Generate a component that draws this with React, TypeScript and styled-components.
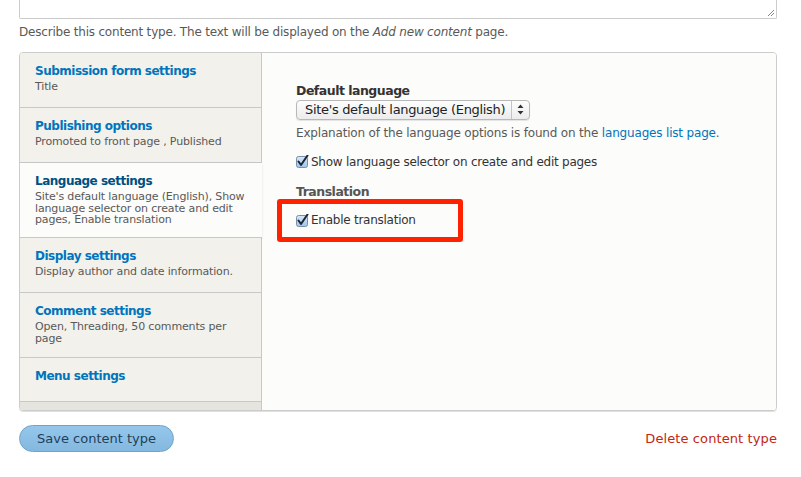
import React, {FC} from 'react';
import styled, {createGlobalStyle} from 'styled-components';

const GlobalStyle = createGlobalStyle`
  body {
    margin: 0;
    background: #fff;
    font-family: "DejaVu Sans", "Open Sans", sans-serif;
    color: #555;
  }
`;

const Page = styled.div`
  padding: 0 24px 0 19px;
`;

const TextArea = styled.div`
  position: relative;
  height: 20px;
  margin-top: -2px;
  border: 1px solid #ccc;
  border-top: none;
  border-radius: 0 0 2px 2px;
  background: #fff;
`;

const Grip = styled.svg`
  position: absolute;
  right: 1px;
  bottom: 1px;
`;

const Description = styled.div`
  margin-top: 5px;
  font-size: 12px;
  letter-spacing: -0.2px;
  line-height: 16px;
  color: #595959;
  em { font-style: italic; }
`;

const VerticalTabs = styled.div`
  display: flex;
  margin-top: 12px;
  height: 357px;
  border: 1px solid #ccc;
  border-radius: 4px;
  overflow: hidden;
  box-shadow: 0 1px 0 #e0e0e0;
`;

const Menu = styled.ul`
  width: 241px;
  margin: 0;
  padding: 0;
  list-style: none;
  display: flex;
  flex-direction: column;
  background: #e5e4df;
  border-right: 1px solid #c8c8c8;
`;

const MenuItem = styled.li<{ $selected?: boolean; $height: number }>`
  height: ${p => p.$height}px;
  box-sizing: border-box;
  padding: 10px 12px 0 15px;
  background: ${p => (p.$selected ? '#fcfcfa' : '#f2f1eb')};
  border-bottom: 1px solid #c8c8c8;
  margin-right: ${p => (p.$selected ? '-1px' : '0')};
  box-shadow: ${p => (p.$selected ? '0 1px 2px rgba(0,0,0,0.12)' : 'none')};
  position: relative;
`;

const TabTitle = styled.div<{ $selected?: boolean }>`
  font-size: 12px;
  font-weight: bold;
  letter-spacing: -0.5px;
  line-height: 16px;
  color: ${p => (p.$selected ? '#004f80' : '#0074bd')};
`;

const TabSummary = styled.div`
  font-size: 11px;
  letter-spacing: -0.15px;
  line-height: 11.5px;
  color: #595959;
  margin-top: 2px;
`;

const Pane = styled.div`
  flex: 1;
  background: #fcfcfa;
  padding: 30px 34px 0 34px;
`;

const Label = styled.div`
  font-size: 12.5px;
  font-weight: bold;
  letter-spacing: -0.5px;
  line-height: 16px;
  color: #333;
  &.heading { color: #555; }
`;

const Select = styled.div`
  display: inline-flex;
  align-items: center;
  height: 20px;
  box-sizing: border-box;
  border: 1px solid #b8b8b8;
  border-radius: 4px;
  background: linear-gradient(#fdfdfd, #ececec);
  font-size: 13px;
  letter-spacing: -0.33px;
  color: #222;
  box-shadow: 0 1px 1px rgba(0, 0, 0, 0.1);
`;

const SelectText = styled.span`
  padding: 0 6px 0 8px;
`;

const SelectArrows = styled.span`
  display: flex;
  align-items: center;
  justify-content: center;
  width: 17px;
  height: 100%;
  border-left: 1px solid #c4c4c4;
`;

const Help = styled.div`
  margin-top: 5px;
  font-size: 12px;
  letter-spacing: -0.18px;
  line-height: 16px;
  color: #595959;
`;

const Link = styled.a`
  color: #0074bd;
  text-decoration: none;
`;

const CheckRow = styled.div<{ $top?: number }>`
  display: flex;
  align-items: center;
  gap: 2px;
  margin-top: ${p => p.$top ?? 0}px;
  font-size: 12px;
  letter-spacing: -0.25px;
  color: #333;
  line-height: 16px;
`;

const Heading = styled(Label)`
  margin-top: 14px;
  color: #555;
`;

const HighlightBox = styled.div`
  margin: -1px 0 0 -19px;
  width: 186px;
  height: 43px;
  box-sizing: border-box;
  border: 5px solid #ff2200;
  border-radius: 3px;
  padding-left: 14px;
  display: flex;
  align-items: center;
`;

const Actions = styled.div`
  display: flex;
  justify-content: space-between;
  align-items: center;
  margin-top: 14px;
`;

const SaveButton = styled.button`
  width: 155px;
  height: 27px;
  border-radius: 14px;
  border: 1px solid #6fa3c8;
  background: linear-gradient(#95c7ec, #84b8de);
  color: #1f3f5a;
  font-family: "DejaVu Sans", sans-serif;
  font-size: 13px;
  padding: 0;
`;

const DeleteLink = styled.a`
  color: #c4260f;
  font-size: 13px;
  letter-spacing: 0.1px;
  text-decoration: none;
`;

const CheckBox: FC = () => (
  <svg width="13" height="13" viewBox="0 0 13 13">
    <defs>
      <linearGradient id="cb" x1="0" y1="0" x2="0" y2="1">
        <stop offset="0" stopColor="#d9e8f7"/>
        <stop offset="1" stopColor="#9ec3ea"/>
      </linearGradient>
    </defs>
    <rect x="0.5" y="1.5" width="11" height="11" rx="2" fill="url(#cb)" stroke="#7a8ea8"/>
    <path d="M2.5 6.5 L5 10 L11.5 0.5" fill="none" stroke="#1b2838" strokeWidth="2" strokeLinecap="round" strokeLinejoin="round"/>
  </svg>
);

const tabs = [
  {title: 'Submission form settings', summary: 'Title', h: 55},
  {title: 'Publishing options', summary: 'Promoted to front page , Published', h: 55},
  {title: 'Language settings', summary: "Site's default language (English), Show language selector on create and edit pages, Enable translation", h: 75, selected: true},
  {title: 'Display settings', summary: 'Display author and date information.', h: 55},
  {title: 'Comment settings', summary: 'Open, Threading, 50 comments per page', h: 65},
  {title: 'Menu settings', summary: '', h: 44},
];

const App: FC = () => {
  return (
    <Page>
      <GlobalStyle/>
      <TextArea>
        <Grip width="9" height="9" viewBox="0 0 9 9">
          <path d="M8 2 L2 8 M8 5 L5 8" stroke="#888" strokeWidth="1"/>
        </Grip>
      </TextArea>
      <Description>
        Describe this content type. The text will be displayed on the <em>Add new content</em> page.
      </Description>
      <VerticalTabs>
        <Menu>
          {tabs.map(t => (
            <MenuItem key={t.title} $selected={t.selected} $height={t.h}>
              <TabTitle $selected={t.selected}>{t.title}</TabTitle>
              {t.summary && <TabSummary>{t.summary}</TabSummary>}
            </MenuItem>
          ))}
        </Menu>
        <Pane>
          <Label>Default language</Label>
          <Select>
            <SelectText>Site's default language (English)</SelectText>
            <SelectArrows>
              <svg width="7" height="11" viewBox="0 0 7 11">
                <path d="M3.5 0.5 L6.5 4 L0.5 4 Z M3.5 10.5 L6.5 7 L0.5 7 Z" fill="#333"/>
              </svg>
            </SelectArrows>
          </Select>
          <Help>
            Explanation of the language options is found on the <Link>languages list page</Link>.
          </Help>
          <CheckRow $top={13}>
            <CheckBox/>
            <span>Show language selector on create and edit pages</span>
          </CheckRow>
          <Heading>Translation</Heading>
          <HighlightBox>
            <CheckRow>
              <CheckBox/>
              <span>Enable translation</span>
            </CheckRow>
          </HighlightBox>
        </Pane>
      </VerticalTabs>
      <Actions>
        <SaveButton>Save content type</SaveButton>
        <DeleteLink>Delete content type</DeleteLink>
      </Actions>
    </Page>
  );
};

export default App;
